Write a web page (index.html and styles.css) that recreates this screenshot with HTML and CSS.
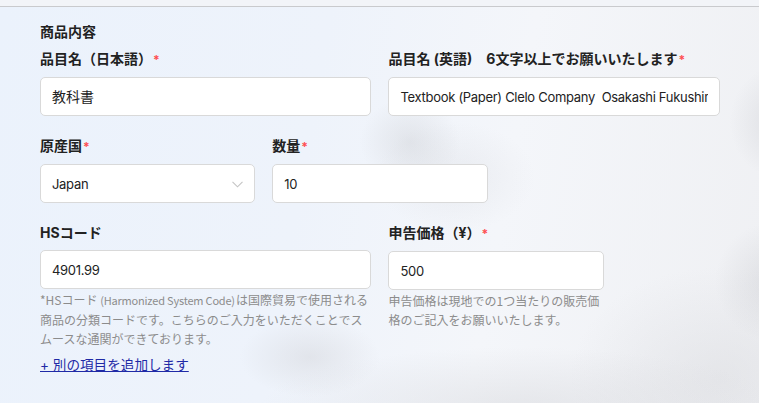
FILE: index.html
```html
<!DOCTYPE html>
<html lang="ja">
<head>
<meta charset="utf-8">
<title>商品内容</title>
<link rel="stylesheet" href="styles.css">
</head>
<body>
<div class="topbar"></div>
<main class="page">
  <section class="form">
    <h2 class="title">商品内容</h2>
    <div class="grid">
      <div class="field span3">
        <label class="label">品目名（日本語）<span class="req">*</span></label>
        <div class="input"><span class="val cjk">教科書</span></div>
      </div>
      <div class="field span3">
        <label class="label">品目名 (英語)　6文字以上でお願いいたします<span class="req">*</span></label>
        <div class="input"><span class="val">Textbook (Paper) Clelo Company&nbsp; Osakashi Fukushima</span></div>
      </div>
      <div class="field span2">
        <label class="label">原産国<span class="req">*</span></label>
        <div class="input select">
          <span class="val">Japan</span>
          <svg class="chev" width="11" height="7" viewBox="0 0 11 7"><polyline points="0.5,0.8 5.5,5.8 10.5,0.8" fill="none" stroke="#c4c4c4" stroke-width="1.1"/></svg>
        </div>
      </div>
      <div class="field span2">
        <label class="label">数量<span class="req">*</span></label>
        <div class="input"><span class="val">10</span></div>
      </div>
      <div class="field span2"></div>
      <div class="field span3">
        <label class="label">HSコード</label>
        <div class="input"><span class="val">4901.99</span></div>
        <p class="help">*HSコード <span class="latin">(Harmonized System Code)</span>は国際貿易で使用される商品の分類コードです。こちらのご入力をいただくことでスムースな通関ができております。</p>
      </div>
      <div class="field span2">
        <label class="label">申告価格（¥）<span class="req">*</span></label>
        <div class="input"><span class="val">500</span></div>
        <p class="help">申告価格は現地での1つ当たりの販売価格のご記入をお願いいたします。</p>
      </div>
    </div>
    <a class="add" href="#">+ 別の項目を追加します</a>
  </section>
</main>
</body>
</html>
```
FILE: styles.css
```css
* { box-sizing: border-box; }
html, body { margin: 0; padding: 0; }
body {
  width: 759px;
  height: 403px;
  overflow: hidden;
  font-family: Inter, "Noto Sans CJK JP", sans-serif;
  color: #222;
  background: #eef2f9;
}
.topbar {
  height: 7px;
  background: #f2f4f8;
  border-bottom: 1px solid #c9cacd;
}
.page {
  height: 396px;
  background:
    radial-gradient(ellipse 50px 45px at 410px 135px, rgba(200,202,207,0.38), rgba(200,202,207,0) 100%),
    radial-gradient(ellipse 80px 55px at 455px 170px, rgba(215,217,222,0.35), rgba(215,217,222,0) 100%),
    radial-gradient(ellipse 45px 55px at 775px 115px, rgba(200,201,206,0.4), rgba(200,201,206,0) 100%),
    radial-gradient(ellipse 60px 60px at 775px 275px, rgba(200,201,206,0.45), rgba(200,201,206,0) 100%),
    radial-gradient(ellipse 70px 40px at 310px 350px, rgba(205,206,211,0.4), rgba(205,206,211,0) 100%),
    radial-gradient(ellipse 260px 60px at 520px 400px, rgba(215,216,220,0.5), rgba(215,216,220,0) 100%),
    radial-gradient(ellipse 150px 110px at 720px 370px, rgba(215,216,220,0.45), rgba(215,216,220,0) 100%),
    linear-gradient(100deg, #ebf2fc 0%, #eef3fb 40%, #f4f6fa 65%, #eff0f3 100%);
}
.form {
  padding: 15px 39px 0 40px;
}
.title {
  margin: 0 0 7px;
  font-size: 14px;
  line-height: 20px;
  font-weight: 700;
}
.grid {
  display: grid;
  grid-template-columns: repeat(6, 1fr);
  column-gap: 17px;
  row-gap: 20px;
}
.span3 { grid-column: span 3; }
.span2 { grid-column: span 2; }
.field { display: flex; flex-direction: column; min-width: 0; }
.label {
  font-size: 14px;
  line-height: 20px;
  font-weight: 700;
  margin-bottom: 7px;
  white-space: nowrap;
}
.req {
  color: #ff4d4f;
  font-size: 12px;
  margin-left: 1px;
}
.input {
  display: flex;
  align-items: center;
  height: 39px;
  background: #fff;
  border: 1px solid #d9d9d9;
  border-radius: 5px;
  padding: 0 11px;
  font-size: 13px;
  color: #222;
}
.val {
  display: block;
  flex: 1;
  min-width: 0;
  white-space: nowrap;
  overflow: hidden;
  letter-spacing: -0.3px;
  line-height: 20px;
}
.val.cjk { font-size: 14px; letter-spacing: 0; }
.select {
  justify-content: space-between;
}
.chev { display: block; flex: none; margin-top: 2px; }
.help {
  margin: 1px 0 0;
  font-family: "Noto Sans CJK JP", sans-serif;
  font-size: 12px;
  line-height: 19px;
  color: #8c8c8c;
}
.latin {
  display: inline-block;
  font-size: 11px;
  line-height: 19px;
  letter-spacing: -0.2px;
  padding-right: 1px;
}
.add {
  display: inline-block;
  margin-top: 7px;
  font-size: 13.6px;
  line-height: 20px;
  color: #1f2aa6;
  text-decoration: underline;
}
```
